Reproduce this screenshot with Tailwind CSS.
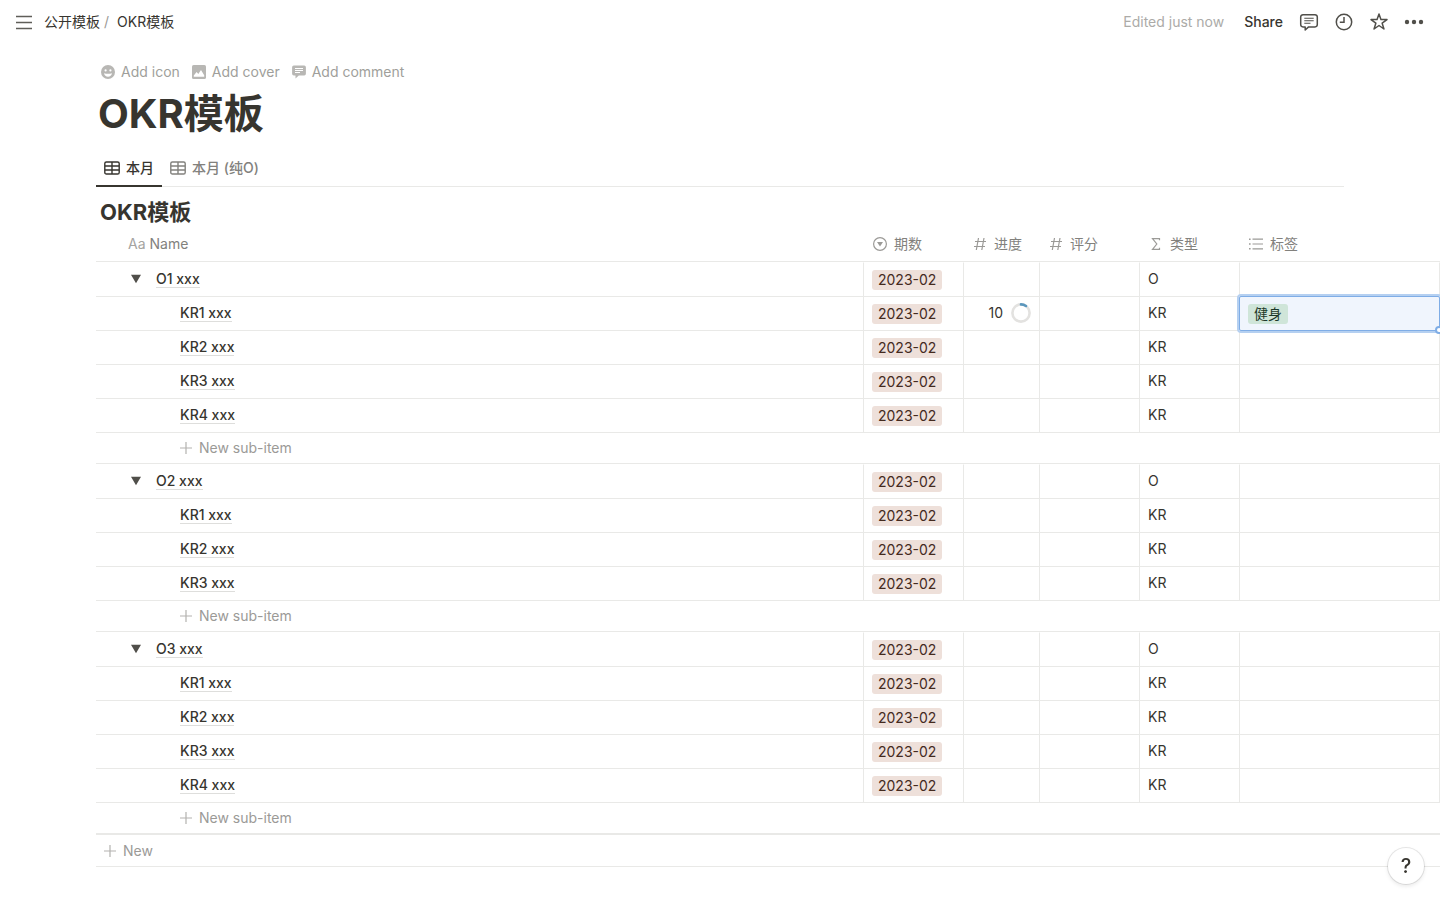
<!DOCTYPE html>
<html lang="zh-CN">
  <head>
    <title>OKR模板</title>
    <meta charset="utf-8" />
    <meta name="viewport" content="width=device-width, initial-scale=1.0" />
    <script src="https://cdn.jsdelivr.net/npm/@tailwindcss/browser@4"></script>
  </head>

  <body class="min-h-screen overflow-x-hidden bg-white font-['Inter','Noto_Sans_CJK_SC',sans-serif] text-sm leading-5 text-[#37352f]">
    <!-- top bar -->
    <header class="flex h-11 items-center justify-between px-4">
      <nav class="flex items-center">
        <button type="button" aria-label="Menu" class="mr-3 text-[#5f5e59]">
          <svg class="size-4" viewBox="0 0 16 16" fill="none" stroke="currentColor" stroke-width="1.6">
            <path d="M0 2.5h16M0 8.5h16M0 14.5h16" />
          </svg>
        </button>
        <a href="#">公开模板</a>
        <span class="mr-2 ml-1 text-[#9b9a97]">/</span>
        <a href="#">OKR模板</a>
      </nav>
      <div class="flex items-center text-[#504f4a]">
        <span class="mr-5 text-[#acaba8]">Edited just now</span>
        <button type="button" class="mr-4 font-medium text-[#37352f]">Share</button>
        <button type="button" aria-label="Comments" class="mr-[15px]">
          <svg class="size-5" viewBox="0 0 20 20" fill="none" stroke="currentColor" stroke-width="1.5" stroke-linejoin="round">
            <path d="M4 2.7h12a2.3 2.3 0 0 1 2.3 2.3v7.6a2.3 2.3 0 0 1-2.3 2.3H9.6L6.2 18v-3.1H4a2.3 2.3 0 0 1-2.3-2.3V5A2.3 2.3 0 0 1 4 2.7z" />
            <path stroke-width="1.1" d="M5.3 6.2h9.4M5.3 8.7h9.4M5.3 11.2h6.2" />
          </svg>
        </button>
        <button type="button" aria-label="Updates" class="mr-[15px]">
          <svg class="size-5" viewBox="0 0 20 20" fill="none" stroke="currentColor" stroke-width="1.5">
            <circle cx="10" cy="10" r="7.7" />
            <path d="M10 5v5.3H5.8" />
          </svg>
        </button>
        <button type="button" aria-label="Favorite" class="mr-[15px]">
          <svg class="size-5" viewBox="0 0 20 20" fill="none" stroke="currentColor" stroke-width="1.5" stroke-linejoin="round">
            <path d="M10 1.9l1.95 5.7h6.05l-4.85 3.6 1.8 5.8L10 13.5 5.05 17l1.8-5.8L2 7.6h6.05z" />
          </svg>
        </button>
        <button type="button" aria-label="More">
          <svg class="size-5" viewBox="0 0 20 20" fill="currentColor">
            <circle cx="3" cy="10" r="2.2" />
            <circle cx="10" cy="10" r="2.2" />
            <circle cx="17" cy="10" r="2.2" />
          </svg>
        </button>
      </div>
    </header>

    <main class="pl-24">
      <!-- page title -->
      <div class="flex gap-[11px] pt-[18px] pl-1 text-[#a09f9b]">
        <button type="button" class="flex items-center gap-[5px]">
          <svg class="size-4" viewBox="0 0 16 16">
            <circle cx="8" cy="8" r="7" fill="#b8b7b4" />
            <circle cx="5.6" cy="6.4" r="1.1" fill="#fff" />
            <circle cx="10.4" cy="6.4" r="1.1" fill="#fff" />
            <path fill="#fff" d="M4 9.2q4 1 8 0C11.6 11.5 10 12.7 8 12.7S4.4 11.5 4 9.2z" />
          </svg>
          Add icon
        </button>
        <button type="button" class="flex items-center gap-[5px]">
          <svg class="size-4" viewBox="0 0 16 16">
            <rect x="1" y="1" width="14" height="14" rx="1.6" fill="#b8b7b4" />
            <path fill="#fff" d="M2.8 12.8V11.5L5.6 8l1.7 1.9L10 6l3.2 5.3v1.5z" />
          </svg>
          Add cover
        </button>
        <button type="button" class="flex items-center gap-[5px]">
          <svg class="size-4" viewBox="0 0 16 16">
            <path fill="#b8b7b4" d="M2.8 1.5h10.4a1.7 1.7 0 0 1 1.7 1.7v6.600a1.7 1.7 0 0 1-1.7 1.7H7.8L4.5 14.5v-3H2.8a1.7 1.7 0 0 1-1.7-1.7V3.2a1.7 1.7 0 0 1 1.7-1.7z" />
            <path stroke="#fff" d="M4 4.5h8M4 6.5h8M4 8.5h5" />
          </svg>
          Add comment
        </button>
      </div>
      <h1 class="mt-2 pl-0.5 text-[40px] leading-[48px] font-bold">OKR模板</h1>

      <!-- view tabs -->
      <div class="mt-3 mr-24 flex h-[37px] border-b border-[#e9e9e7] font-medium">
        <button type="button" class="-mb-px flex items-center border-b-2 border-[#37352f] px-2">
          <svg class="mr-1.5 size-4" viewBox="0 0 16 16" fill="none" stroke="currentColor" stroke-width="1.4">
            <rect x=".8" y="2" width="14.4" height="12" rx="1.6" />
            <path d="M1 6h14M1 10h14M8 2v12" />
          </svg>
          本月
        </button>
        <button type="button" class="flex items-center px-2 text-[#82817d]">
          <svg class="mr-1.5 size-4" viewBox="0 0 16 16" fill="none" stroke="currentColor" stroke-width="1.4">
            <rect x=".8" y="2" width="14.4" height="12" rx="1.6" />
            <path d="M1 6h14M1 10h14M8 2v12" />
          </svg>
          本月 (纯O)
        </button>
      </div>

      <h2 class="mt-[11px] pl-1 text-[22px] leading-7 font-bold">OKR模板</h2>

      <!-- database -->
      <table class="w-full table-fixed border-separate border-spacing-0 text-left">
        <colgroup>
          <col />
          <col class="w-[100px]" />
          <col class="w-[76px]" />
          <col class="w-[100px]" />
          <col class="w-[100px]" />
          <col class="w-[200px]" />
        </colgroup>
        <thead>
          <tr class="h-9 text-[#82817d] *:border-b *:border-[#e9e9e7] *:font-normal">
            <th class="pl-8"><span class="text-[#a5a4a1]">Aa</span> Name</th>
            <th class="pl-2">
              <div class="flex items-center gap-1.5">
                <svg class="size-4" viewBox="0 0 16 16" fill="none" stroke="#9b9a97" stroke-width="1.2">
                  <circle cx="8" cy="8" r="6.4" />
                  <path fill="#9b9a97" stroke="none" d="M5 6h6l-3 4.5z" />
                </svg>
                期数
              </div>
            </th>
            <th class="pl-2">
              <div class="flex items-center gap-1.5">
                <svg class="size-4" viewBox="0 0 16 16" fill="none" stroke="#9b9a97" stroke-width="1.2">
                  <path d="M6.5 2L4.3 14M12 2L9.8 14M3 5.5h11M2 10.5h11" />
                </svg>
                进度
              </div>
            </th>
            <th class="pl-2">
              <div class="flex items-center gap-1.5">
                <svg class="size-4" viewBox="0 0 16 16" fill="none" stroke="#9b9a97" stroke-width="1.2">
                  <path d="M6.5 2L4.3 14M12 2L9.8 14M3 5.5h11M2 10.5h11" />
                </svg>
                评分
              </div>
            </th>
            <th class="pl-2">
              <div class="flex items-center gap-1.5">
                <svg class="size-4" viewBox="0 0 16 16" fill="none" stroke="#9b9a97" stroke-width="1.2">
                  <path d="M11.5 4.3V2.6H4.5L8.8 8l-4.3 5.4h7v-1.7" />
                </svg>
                类型
              </div>
            </th>
            <th class="pl-2">
              <div class="flex items-center gap-1.5">
                <svg class="size-4" viewBox="0 0 16 16" fill="none" stroke="#9b9a97" stroke-width="1.2">
                  <path d="M4.5 3.2H15M4.5 8H15M4.5 12.8H15" />
                  <path stroke-width="1.6" d="M1 3.2h1.6M1 8h1.6M1 12.8h1.6" />
                </svg>
                标签
              </div>
            </th>
          </tr>
        </thead>
        <tbody id="rows"></tbody>
      </table>
      <div class="h-8 border-b border-[#e9e9e7]">
        <button type="button" class="flex h-full w-full items-center gap-[7px] pl-2 text-[#9b9a97]">
          <svg class="size-3" viewBox="0 0 12 12" stroke="#b3b2af" stroke-width="1.2"><path d="M6 0v12M0 6h12" /></svg>
          New
        </button>
      </div>
    </main>

    <button type="button" aria-label="Help" class="fixed right-4 bottom-4 size-9 rounded-full bg-white text-xl leading-9 font-medium shadow-[0_0_0_1px_rgba(15,15,15,0.1),0_2px_4px_rgba(15,15,15,0.1)]">?</button>

    <script>
      // number of key results under each objective
      const objectives = [4, 3, 4];

      const tag = `<span class="block h-5 w-fit rounded-[3px] bg-[#eee0da] px-1.5 text-[#442a1e]">2023-02</span>`;

      const progress = `
        <div class="flex items-center justify-end gap-2">10
          <svg class="size-5" viewBox="0 0 20 20" fill="none" stroke-width="2.6">
            <circle cx="10" cy="10" r="8.6" stroke="#e3e2e0" />
            <path stroke="#5b97bd" stroke-linecap="round" d="M10 1.4A8.6 8.6 0 0 1 15 3" />
          </svg>
        </div>`;

      // tag plus the focus outline and its drag handle
      const selected = `
        <span class="block h-5 w-fit rounded-[3px] bg-[#cfe5d9] px-1.5 text-[#1c3829]">健身</span>
        <div class="pointer-events-none absolute -inset-px rounded-xs border border-[#7fade6] ring-2 ring-[#b5d0f1]"></div>
        <div class="absolute -right-1 -bottom-1 size-2 rounded-full border-2 border-[#7fade6] bg-white"></div>`;

      const cells = (type, first) => `
        <td class="pt-[7px] pl-2">${tag}</td>
        <td class="pt-1.5 pr-2">${first ? progress : ""}</td>
        <td></td>
        <td class="pt-1.5 pl-2">${type}</td>
        <td class="${first ? "relative bg-[#f0f5fd] pt-[7px] pl-2" : ""}">${first ? selected : ""}</td>`;

      let html = "";
      objectives.forEach((count, i) => {
        html += `
          <tr class="h-[35px] align-top *:border-t *:border-r *:border-b *:border-[#e9e9e7] *:border-t-transparent">
            <td class="pt-1.5">
              <div class="flex h-5 items-center pl-[35px]">
                <button type="button" aria-label="Toggle" class="mr-[15px]">
                  <svg class="size-2.5" viewBox="0 0 10 10" fill="#504f4a"><path d="M0 .8h10L5 9.2z" /></svg>
                </button>
                <a href="#" class="border-b border-[#dededc] leading-4 font-medium">O${i + 1} xxx</a>
              </div>
            </td>
            ${cells("O", false)}
          </tr>`;
        for (let k = 1; k <= count; k++) {
          html += `
            <tr class="h-[34px] align-top *:border-r *:border-b *:border-[#e9e9e7]">
              <td class="pt-1.5">
                <div class="flex h-5 items-center pl-[84px]">
                  <a href="#" class="border-b border-[#dededc] leading-4 font-medium">KR${k} xxx</a>
                </div>
              </td>
              ${cells("KR", i === 0 && k === 1)}
            </tr>`;
        }
        const last = i === objectives.length - 1;
        html += `
          <tr class="${last ? "h-8" : "h-[31px]"}">
            <td colspan="6" class="${last ? "border-b-2" : "border-b"} border-[#e9e9e7] pl-[84px]">
              <button type="button" class="flex items-center gap-[7px] text-[#9b9a97]">
                <svg class="size-3" viewBox="0 0 12 12" stroke="#b3b2af" stroke-width="1.2"><path d="M6 0v12M0 6h12" /></svg>
                New sub-item
              </button>
            </td>
          </tr>`;
      });
      document.getElementById("rows").innerHTML = html;
    </script>
  </body>
</html>
